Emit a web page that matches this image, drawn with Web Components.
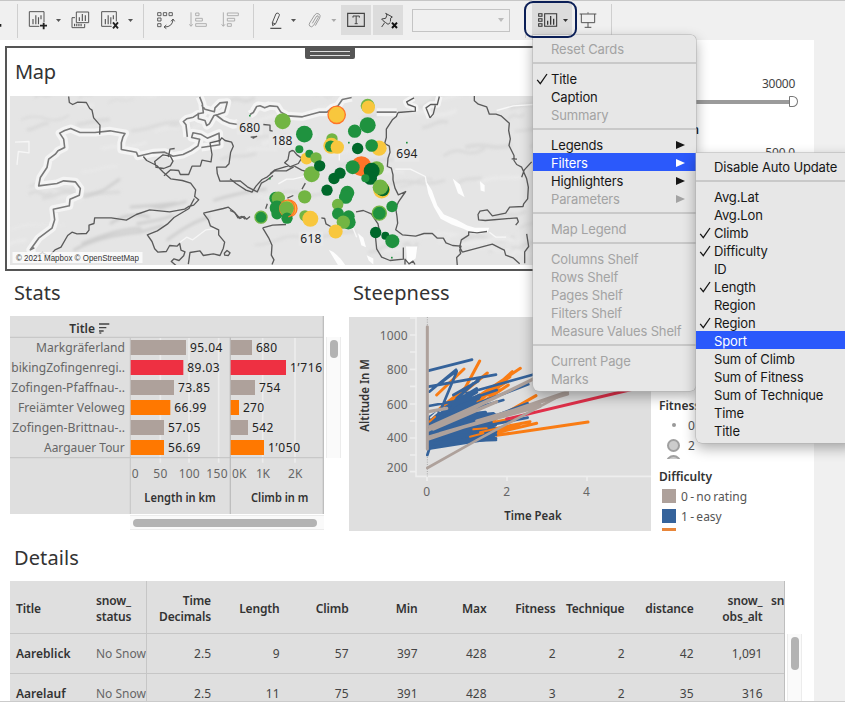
<!DOCTYPE html>
<html lang="en">
<head>
<meta charset="utf-8">
<title>Dashboard</title>
<style>
html,body{margin:0;padding:0;width:845px;height:702px;overflow:hidden;background:#f0f0f0}
body{font-family:"Noto Sans","Open Sans",sans-serif;font-size:12px;color:#333}
</style>
</head>
<body>
<dash-app></dash-app>
<script>
const define=(name,html,setup)=>customElements.define(name,class extends HTMLElement{
  constructor(){super();this.attachShadow({mode:'open'});}
  connectedCallback(){this.shadowRoot.innerHTML=typeof html==='function'?html(this):html;if(setup)setup(this);}
});

/* Toolbar icons, drawn on a triple-size grid: [viewBox x, markup] */
const chartBox=x=>`<path d="M${x} 35h44v44h-44z" fill="none" stroke="#555" stroke-width="3"/><path d="M${x+11} 57v16M${x+19.500} 46v27M${x+27.500} 52v21M${x+35} 46v12" fill="none" stroke="#555" stroke-width="3.400"/>`;
const caret=(x,c='#555')=>`<path d="M${x} 57h15l-7.500 9z" fill="${c}"/>`;
const ICONS={
 tail:[0,`<path d="M0 72h4v8h-4z" fill="#222"/>`],
 add:[54,chartBox(88)+`<path d="M118 66h25v22h-25z" fill="#f0f0f0"/><path d="M131 68v20M120 77h21" stroke="#222" stroke-width="5.500"/>`+caret(168)],
 dup:[201,`<path d="M225 53h-9v30h38v-11" fill="none" stroke="#555" stroke-width="3"/><path d="M229 36h37v32h-37z" fill="#f0f0f0" stroke="#555" stroke-width="3"/><path d="M238 52v11M247 42v21M256 46v17" stroke="#555" stroke-width="3.400"/><path d="M222 75h25" stroke="#555" stroke-width="7" stroke-dasharray="3.500 3"/>`],
 del:[285,chartBox(305)+`<path d="M335 64h24v24h-24z" fill="#f0f0f0"/><path d="M339 67l15 18M354 67l-15 18" stroke="#222" stroke-width="5.500"/>`+caret(384)],
 swap:[432,`<path d="M473 38h10v9h-10zM490 38h10v9h-10zM507 38h10v9h-10zM473 54h10v9h-10zM473 71h10v9h-10z" fill="none" stroke="#555" stroke-width="2.800"/><path d="M494 81q23 0 25-22M513 64l6-7 5 7M499 75l-7 6 7 5" fill="none" stroke="#555" stroke-width="3"/>`],
 asc:[552,`<path d="M573 37v41M568 73l5 6 5-6M587 39h10v8h-10zM587 55h20v8h-20zM587 71h32v8h-32z" fill="none" stroke="#aaa" stroke-width="2.800"/>`],
 desc:[642,`<path d="M670 37v41M665 73l5 6 5-6M682 39h33v8h-33zM682 55h22v8h-22zM682 71h12v8h-12z" fill="none" stroke="#aaa" stroke-width="2.800"/>`],
 pen:[-18,`<path d="M31 85h33" stroke="#444" stroke-width="3.500"/><path d="M37 68l11-27q3-3 7-1 4 2 3 6l-11 25-9 6zM37 68l9 4" fill="none" stroke="#444" stroke-width="2.800"/>`+caret(93)],
 clip:[123,`<path d="M157 70l13-22q6-3 5 4l-14 24q-6 8-12 2-3-4 0-9l15-24q6-8 13-3 6 4 2 12l-13 23" fill="none" stroke="#999" stroke-width="2.800"/>`+caret(214,'#aaa')],
 text:[243,`<path d="M263 40h50v39h-50z" fill="none" stroke="#444" stroke-width="3.500"/><path d="M279 53v-5h19v5M288.500 48v23M284 71h9" fill="none" stroke="#444" stroke-width="3"/>`],
 pin:[339,`<path d="M377 40l20 11-5 3-1 14-7 5-8-6-7-5-4-5 12-2 4-10zM374 68l-9 13" fill="none" stroke="#444" stroke-width="3"/><path d="M391 64h24v24h-24z" fill="#dcdcdc"/><path d="M396 68l15 16M411 68l-15 16" stroke="#111" stroke-width="6"/>`],
 cards:[78,`<path d="M116 41h10v8h-10zM116 56h10v8h-10zM116 71h10v8h-10zM134 41h36v38h-36z" fill="none" stroke="#333" stroke-width="3.200"/><path d="M143 62v12M152 48v26M161 56v18" stroke="#333" stroke-width="3.800"/>`+caret(189,'#333')],
 present:[216,`<path d="M239 42h50M244 42v26h40v-26M264 68v14M254 82h20M264 37v4" fill="none" stroke="#555" stroke-width="3"/>`]
};
define('tool-icon',el=>{
  const [x,body]=ICONS[el.getAttribute('name')],w=+el.getAttribute('w');
  return `<style>:host{display:block;flex:none;width:${w}px;height:40px}:host([on]){background:#dcdcdc;height:30px;margin:0 1px}
  svg{display:block;width:100%;height:100%}</style>
  <svg viewBox="${x} ${el.hasAttribute('on')?15:0} ${w*3} ${el.hasAttribute('on')?90:120}">${body}</svg>`;
});
define('tool-rule',`<style>:host{display:block;flex:none;width:1px;height:34px;margin-top:2px;background:#cfcfcf}</style>`);
define('tool-bar',`<style>
 :host{display:flex;align-items:center;height:40px;box-sizing:border-box;box-shadow:inset 0 1px #c6c6c6;background:#f0f0f0;position:relative}
 .combo{flex:none;box-sizing:border-box;width:98px;height:23px;border:1px solid #c4c4c4;margin:0 15px 0 8px;display:flex;align-items:center;justify-content:flex-end;padding-right:5px}
 .combo i{border:3.500px solid transparent;border-top:4px solid #bbb;border-bottom:0}
 .cards{flex:none;width:46px;height:40px;display:flex;background:linear-gradient(90deg,transparent 6px,#dcdcdc 6px)}
 .ring{position:absolute;left:524px;top:1px;width:53px;height:37px;box-sizing:border-box;border:2.500px solid #0b1f57;border-radius:9px;z-index:5}
 </style>
 <tool-icon name="tail" w="17"></tool-icon><tool-rule></tool-rule>
 <tool-icon name="add" w="49"></tool-icon><tool-icon name="dup" w="28"></tool-icon><tool-icon name="del" w="48"></tool-icon><tool-rule></tool-rule>
 <tool-icon name="swap" w="40"></tool-icon><tool-icon name="asc" w="30"></tool-icon><tool-icon name="desc" w="39"></tool-icon><tool-rule></tool-rule>
 <tool-icon name="pen" w="47"></tool-icon><tool-icon name="clip" w="39"></tool-icon>
 <tool-icon name="text" w="30" on></tool-icon><tool-icon name="pin" w="30" on></tool-icon>
 <div class="combo"><i></i></div><tool-rule></tool-rule>
 <div class="cards"><tool-icon name="cards" w="46"></tool-icon></div><tool-icon name="present" w="39"></tool-icon><tool-rule></tool-rule>
 <div class="ring"></div>`);

define('panel-title',`<style>:host{display:block;font-size:20px;line-height:28px;font-weight:400;color:#333;letter-spacing:.1px;white-space:nowrap}</style><slot></slot>`);

/* Map: two halves, each with its own triple-size drawing grid */
const bL=[
 'M206 18l2 18 10 6 15-7 26 1 10 18 7 5 5 23 19 22-1 28',
 'M430 198l10 12 30 15 20 20 22 20 35 5 25 8 15 20-3 20 12 10-15 16-15 4-12 8-45 8-60-6-40 14-30 17-45-7-50 0 -2 17-15 5v15l-8 10-28 1-15-5-13 10-20 35-18 8-18 20-20-12-18 12',
 'M468 228l-4-15 25-20 22 4 8 15-8 14-20 8-25-4M505 200l5-24 14-2M492 256l20-18 24 2 5 12 25 0 10-25h25l5-18 27 5 3-22-6-35 30-7 5-8 10 8 20 5 5 12-8 18-5 35-10 10h-27l2 20 8 22 60-1 22 18 30 15 12-26 15-8 20-15',
 'M583 324l-16 30-25 15-20 12-20 20-30 20-30 12 14 20 8 22 10 10 25-2 10-18 22 2 8-8 4 20 12 5-4 12-14 14-15-5-8 8 14 12-4 14',
 'M610 368l60-14 15-4 15 12 20 22 12-6 8 8 10-8M610 368l15 20 6 18 25 12 0 15 18 22-4 18-10 22-20-5-30 5-10-14-30 5-5 35M673 488l8-8 9 7-5 8-11-1z'
];
const bMain='M103 472l-12 6 25-35 40-30 8-25-4-32 48-10 2-20 28-12 3-20-15-20-35-3-20 8-55 7 5-25 20-30 5-25 20-15 8-10 20-10-3-25-12-18 15-8 18-6 28 12h45l45-5 45 8-6 10-5 18v20l45 8 5 12 45-10 35-2 25 12 30-5 25-12 20-14 5-20-24-5 4-14 23 4 20 12 35-15 2 35-55 8M562 139l-4-36-8-10 10-8 20-5 15-10 15-3-3-28-8-20M605 44l10 12 28 8 2-12 15-15 22-2-8 30-20 7-12 3-14 25-8 5-5-15-20-5 0-18M650 75l20 15 30 13 15-6M760 62l15-17 20 3 15-4';
const bR=[
 'M504 66l-5 12-12 10-18 28 0 25-5 18 14 8 2 18-6 18-2 25 12 5 5 20 0 15 6 25 10 20 22-10-22 32-8 18 4 25 2 20-6 20 20 15 40 4 25-8 25 0 15 14 18 0 8 14 20 8 25 2-4 12 3 10-12 12 2 25',
 'M504 66l52-4 0-12-22-8-4-8 22-12M600 82l-12-30 14-10h20l6-24M600 82l10-12 6-25M733 16l0 15 12 10 25 8 8 22 20 0 15 5 25 22-2 22 5 25-4 20 15 30 0 15 8 12 15 8 15 35 5 25-2 35-12 15 -2 8-40 2-12 18-40 8-15-18-22 4-6 10 2 16 20 2 95-8 4 12-8 10M845 205l16 1M875 260l8-22 22-24M697 485l-8-15 5-22 22-14 0-10 25 3 30-4M697 485l90-24 28 14 8 4 4 15 22 8 20 18M890 430l6 38-12 16 0 34',
 'M0 265l18 14 30 20 18 6 12-18 18-20 16-8 22-18h35l22-12M186 180l-8 5-4 22-10 10 16 12 25-10 10-16-14-10-10-12zM120 250l15-12 40-12M190 225l25 14 14 4M0 360l14 6 10 16 12-4 10 8M98 412l30-8 40-2M98 412l18 30 10 22-2 30 8 14-6 14M274 382l10 2 4 16 14 8M378 364l22-4 24 10 20 30 4 20-12 15 4 40 15 25 25 10 40-4v-35M525 522l0-16 12 14 12-8 6 10M226 278l-10 18M190 315l-18 8M112 340l-5 15M100 102l20 2 0 16 8 2M62 140l18-2-12 6'
];
const bTop='M60 72l10-6 10-18 10-2 14 6 16-6 22 2 10 16 20 12 45 3 50-14 24 0 14-12 18-6 14-20 28-6M440 65l60 0M0 98l24 4';
const G='#1f923f',L='#72b543',D='#00682b',Y='#f8c73d',O='#ff7428';
const dots=[[158,92,24,L],[320,73,26,Y,O],[413,46,21,L],[415,50,20,Y],[223,131,25,G],[413,104,24,G],[374,122,20,G],[208,176,12,G],[306,145,17,L],[304,166,24,Y],[302,167,17,G],[322,170,20,Y],[383,174,17,D],[447,173,23,Y],[425,165,19,G],[230,204,18,Y],[238,190,12,G],[258,202,17,L],[245,251,24,L],[269,226,17,D],[394,227,30,O],[368,230,21,G],[440,234,22,L],[425,241,24,D],[421,263,20,D],[406,263,12,G],[312,264,17,D],[330,248,17,D],[291,299,17,D],[455,299,25,Y],[458,297,20,D],[451,290,23,L],[352,307,21,G],[347,320,20,G],[323,342,17,L],[224,319,20,L],[137,323,19,G],[145,323,20,L],[141,352,22,G],[141,370,17,G],[175,354,26,Y,O],[170,354,22,L],[171,383,17,G],[93,380,18,G,L],[225,376,17,L],[241,385,24,Y],[324,370,18,G],[356,377,18,G],[355,395,22,G],[340,395,20,L],[317,423,21,Y],[448,368,21,G,L],[486,348,17,G],[437,426,17,D],[466,436,12,D],[487,452,21,G]];
const pins=[[60,75],[357,156],[531,156],[120,264],[486,501]];
define('dash-map',()=>{
  let s=7;const r=()=>(s=(s*16807)%2147483647)/2147483647;
  let relief='';
  for(let i=0;i<90;i++){const x=r()*1900,y=r()*510,w=20+r()*70;relief+=`<path d="M${x|0} ${y|0}q${w/2|0} ${-25*r()|0} ${w|0} ${-18*r()|0}t${w|0} ${-12*r()|0}" stroke="${r()>.5?'#d3d3d3':'#eee'}" stroke-width="${4+r()*9|0}"/>`;}
  return `<style>:host{display:block;height:169px;overflow:hidden;background:#e5e5e5}svg{display:block}</style>
 <svg width="637" height="169" viewBox="10 95.500 637 169" font-family="Noto Sans,sans-serif">
 <defs><filter id="b"><feGaussianBlur stdDeviation="5"/></filter></defs>
 <g transform="translate(0 90) scale(.33333)" fill="none" stroke-linejoin="round">
  <g filter="url(#b)" opacity=".6">${relief}</g>
  <g stroke="#cecece" stroke-width="8" filter="url(#b)"><path d="M220 480q80-45 200-55l70-20M245 460q120-50 180-45M330 400q60-40 120-20M390 350q80-5 140-12M410 400q70-10 110-25M500 450q80-60 130-70M640 330q80-25 160-35M440 345l40 8 80-20M250 320l60-20 50-35"/></g>
  <path d="${bMain}" stroke="#f4f4f4" stroke-width="24"/>
  <path d="M45 155l42-2v34l-32-4-4 40M540 455l20-15 18 8 40-30 30-4" stroke="#f6f6f6" stroke-width="4"/>
  <path d="${bMain}" stroke="#787878" stroke-width="4.800"/>
  <path d="${bL.join('')}" stroke="#5a5a5a" stroke-width="4"/>
 </g>
 <g transform="translate(230 90) scale(.33333)" fill="none" stroke-linejoin="round">
  <path d="${bTop}" stroke="#f4f4f4" stroke-width="24"/>
  <path d="M555 62l0-12-22-8-4-8 22-12M600 82l-12-30 14-10h20l6-24" stroke="#f4f4f4" stroke-width="20"/>
  <g fill="#fdfdfd"><path d="M587 270L606 300 622 345 642 372 680 388 712 405 735 412 778 412 772 426 735 431 700 415 665 402 632 385 612 350 595 310zM668 264l22 18 14 38-20-12zM750 272l14 12 0 20-12-4zM528 468h34l-5 35-25 20zM296 478q25 8 50 46h-22zM384 428l16 14 8 28-14-6zM410 494l20 10 0 18-14-12z"/></g>
  <path d="M496 236l45 0 45 22 4 25M800 60l50-14 60-4M145 280l25-14 20 0 40-10M328 170v40M300 150l0 18M360 390l20 50M778 425l20 15 30 0" stroke="#f8f8f8" stroke-width="4"/>
  <path d="${bTop}" stroke="#787878" stroke-width="4.800"/>
  <path d="${bR.join('')}" stroke="#5a5a5a" stroke-width="4"/>
  <g fill="#e8e8e8" fill-opacity=".9"><path d="M20 90h78v42h-78zM116 131h78v40h-78zM494 172h74v42h-74zM206 424h74v42h-74z"/></g>
  ${dots.map(([x,y,q,c,o])=>`<circle cx="${x}" cy="${y}" r="${q}" fill="${c}" ${o?`stroke="${o}" stroke-width="4"`:''}/>`).join('')}
  <path d="M175 329a26 26 0 0 1 0 50" stroke="${O}" stroke-width="4"/>
  ${pins.map(([x,y])=>`<path d="M${x-3} ${y-2}h5v5h-5z" fill="${G}"/>`).join('')}
  <g fill="#222" font-size="36"><text x="28" y="124" textLength="62">680</text><text x="125" y="163" textLength="62">188</text><text x="499" y="204" textLength="63">694</text><text x="211" y="457" textLength="63">618</text></g>
 </g>
 <path d="M12.500 251.500h130v11h-130z" fill="#fff" fill-opacity=".75"/>
 <text x="16" y="260" textLength="123" lengthAdjust="spacingAndGlyphs" font-family="Liberation Sans,sans-serif" font-size="8.500" fill="#333">© 2021 Mapbox © OpenStreetMap</text>
 </svg>`;});

define('map-panel',`<style>
 :host{display:block;box-sizing:border-box;width:647px;height:225px;border:2px solid #555;background:#fff;padding:10px 3px 0;position:relative}
 panel-title{margin:0 0 9.500px 5px;letter-spacing:-.3px}
 .grip{position:absolute;left:298px;top:-1px;width:50px;height:12px;background:#555;border-radius:0 0 2px 2px;display:flex;flex-direction:column;gap:3px;justify-content:center;align-items:center}
 .grip i{width:40px;height:1px;background:#ddd}
 </style><panel-title>Map</panel-title><dash-map></dash-map><div class="grip"><i></i><i></i></div>`);

define('range-filters',`<style>
 :host{display:block;width:143px;padding-top:29px;font-size:12px;color:#444}
 .max{text-align:right;line-height:17px;letter-spacing:-.25px}
 .slide{display:flex;align-items:center;height:11px;margin:4px -3px 0 0}
 .slide i{flex:1;height:4px;background:#9b9b9b}
 .slide b{box-sizing:border-box;width:9px;height:11px;border:1.300px solid #777;background:#fff;border-radius:1px 6px 6px 1px}
 .name{font-weight:600;line-height:16px;color:#222;margin:15px 0 0;width:47px;text-align:right;white-space:nowrap}
 .val{text-align:right;line-height:17px;margin-top:6px;letter-spacing:-.2px}
 </style><div class="max">30000</div><div class="slide"><i></i><b></b></div><div class="name">in m</div><div class="val">500.0</div>`);

define('scroll-track',el=>{const v=el.hasAttribute('vertical');return `<style>:host{display:block;box-sizing:border-box;background:#fafafa;${v?'border:solid #ececec;border-width:0 1px;width:15px;padding:3px 3px':'border:solid #ececec;border-width:1px 0;height:15px;padding:3px 3px'}}
 i{display:block;background:#b3b3b3;border-radius:4px;${v?'width:8px':'height:8px'};${v?'height':'width'}:${el.getAttribute('thumb')}px}</style><i></i>`;});

/* Stats bar chart on a triple-size grid */
const rows=[['Markgräferland',267,108,'95.04',166,'#aea19b','680',64,97,63],['bikingZofingenregi..',341,34,'89.03',158,'#ee3042','1’716',166,97,96],['Zofingen-Pfaffnau-..',341,34,'73.85',130,'#aea19b','754',73,96,64],['Freiämter Veloweg',321,54,'66.99',119,'#ff7800','270',25,96,63],['Zofingen-Brittnau-..',338,37,'57.05',100,'#aea19b','542',52,97,64],['Aargauer Tour',242,132,'56.69',100,'#ff7800','1’050',100,97,96]];
define('stats-chart',()=>`<style>:host{display:block;width:314px;height:198px}svg{display:block}</style>
 <svg width="314" height="198" viewBox="30 123 942 594" font-family="Noto Sans,sans-serif" font-size="36" fill="#666">
 <path d="M30 123h942v594h-942z" fill="#dfdfdf"/>
 <path d="M481 188v375M567 188v375M656 188v375M788 188v375M885 188v375" stroke="#ececec" stroke-width="5"/>
 <path d="M30 187h942M391 187v530M30 548h942" stroke="#c8c8c8" stroke-width="3.500" fill="none"/><path d="M691 187v530M970 123v594" stroke="#bebebe" stroke-width="4"/>
 <text x="208" y="173" font-weight="600" fill="#333" textLength="77">Title</text>
 <path d="M297 147h31M297 158h22M297 168h14" stroke="#444" stroke-width="4"/><path d="M298 174h6" stroke="#444" stroke-width="4"/>
 ${rows.map((r,i)=>{const y=231+i*60;return `<text x="${r[2]}" y="${y}" textLength="${r[1]}" lengthAdjust="spacingAndGlyphs">${r[0]}</text>
 <path d="M392 ${195+60*i}h${r[4]}v45h-${r[4]}zM692 ${195+60*i}h${r[7]}v45h-${r[7]}z" fill="${r[5]}"/>
 <text x="${392+r[4]+12}" y="${y}" fill="#222" textLength="${r[8]}">${r[3]}</text><text x="${692+r[7]+12}" y="${y}" fill="#222" textLength="${r[9]}">${r[6]}</text>`}).join('')}
 <text x="395" y="608">0</text><text x="460" y="608" textLength="42">50</text><text x="536" y="608" textLength="63">100</text><text x="619" y="608" textLength="64">150</text>
 <text x="696" y="608" textLength="43">0K</text><text x="768" y="608" textLength="42">1K</text><text x="864" y="608" textLength="43">2K</text>
 <g font-weight="600" fill="#333"><text x="433" y="680" textLength="214" lengthAdjust="spacingAndGlyphs">Length in km</text><text x="753" y="680" textLength="172" lengthAdjust="spacingAndGlyphs">Climb in m</text></g>
 </svg>`);
define('stats-panel',`<style>:host{display:grid;grid-template-columns:314px 15px;grid-template-rows:44px 198px 15px;column-gap:2px;row-gap:1px;width:331px}
 panel-title{grid-column:1/3;padding:8px 0 0 4px}
 scroll-track[vertical]{height:121px;margin-top:21px}
 .h{grid-column:1;margin-left:120px}</style>
 <panel-title>Stats</panel-title><stats-chart></stats-chart><scroll-track vertical thumb="18"></scroll-track><scroll-track class="h" thumb="184"></scroll-track>`);

/* Steepness line chart */
define('steep-chart',()=>{
  const B='#35639b',OR='#f97c14',T='#aea19b';
  let s=11;const r=()=>(s=(s*16807)%2147483647)/2147483647;
  const ln=(a,c,w=8)=>`<path d="${a.map(p=>`M${p[0]} ${p[1]}L${p[2]} ${p[3]}`).join('')}" stroke="${c}" stroke-width="${w}"/>`;
  const fan=[];
  for(let i=0;i<22;i++){const y=478-i*2.200;fan.push([266,y,385+r()*35,y-66-r()*20]);}
  const low=[];
  for(let i=0;i<22;i++)low.push([266,430+i*4.300,430+r()*38,412+i*3.800]);
  return `<style>:host{display:block;width:302px;height:214px}svg{display:block}</style>
 <svg width="302" height="214" viewBox="27 126 906 642" font-family="Noto Sans,sans-serif" font-size="36" fill="#666">
 <path d="M27 126h906v642h-906z" fill="#dfdfdf"/>
 <path d="M228 126v478h705M210 129h18M210 180h18M210 231h18M210 283h18M210 334h18M210 387h18M210 438h18M210 489h18M210 540h18M210 590h18M261 604v14M501 604v14M741 604v14" fill="none" stroke="#eee" stroke-width="5"/>
 <path d="M262 126v478" stroke="#aaa" stroke-width="3" stroke-dasharray="3 4"/>
 <g fill="none" stroke-linecap="round">
 ${ln([[290,360,372,282],[275,430,442,294],[375,340,419,258],[300,400,380,335],[268,440,330,400],[390,380,541,280],[400,385,500,320],[400,395,517,290],[405,382,510,305],[400,400,505,330],[420,365,500,310],[400,375,480,345],[400,370,470,335],[400,470,588,362],[440,480,590,445],[420,470,570,440],[400,455,520,430],[470,481,744,441],[450,470,540,455],[380,465,450,462]],OR,9)}
 ${ln(fan,B,9)}${ln(low,B,10)}
 ${ln([[262,540,275,500],[266,287,396,254],[266,335,468,299],[268,350,348,284],[300,325,350,288],[300,410,350,290],[310,410,400,325],[350,370,420,310],[340,360,415,318],[266,393,420,365],[380,355,578,299],[400,390,565,328],[270,425,410,340],[340,390,470,345],[270,445,400,352],[266,440,490,375],[420,440,563,385],[450,450,563,428],[266,480,468,480],[300,500,468,495],[266,505,468,490],[266,520,468,470]],B)}
 ${ln([[272,428,290,412],[300,408,315,398]],'#dfdfdf',5)}${ln([[268,440,285,425],[390,485,430,475],[420,472,480,458],[400,463,440,460]],OR,6)}
 ${ln([[262,155,262,522]],T,9)}${ln([[266,410,320,400],[266,465,580,312],[270,455,460,370],[280,462,470,380]],T,10)}
 ${ln([[266,492,683,350],[266,486,540,405],[300,475,600,388],[350,462,600,395],[410,438,683,357]],T,9)}
 ${ln([[500,432,940,328]],'#e0304a',9)}${ln([[262,579,420,490],[420,490,683,350]],T,8)}
 </g>
 <text x="119" y="194" textLength="84">1000</text><text x="140" y="297" textLength="63">800</text><text x="140" y="401" textLength="63">600</text><text x="140" y="502" textLength="63">400</text><text x="140" y="591" textLength="63">200</text>
 <text x="250" y="663">0</text><text x="490" y="663">2</text><text x="729" y="663">4</text>
 <g font-weight="600" fill="#333"><text x="493" y="735" textLength="172" lengthAdjust="spacingAndGlyphs">Time Peak</text><text transform="translate(88 470) rotate(-90)" textLength="218" lengthAdjust="spacingAndGlyphs">Altitude In M</text></g>
 </svg>`;});
define('steep-panel',`<style>:host{display:block;width:302px}panel-title{padding:8px 0 10px 4px}</style><panel-title>Steepness</panel-title><steep-chart></steep-chart>`);

define('chart-legend',`<style>
 :host{display:block;width:150px;height:260px;box-sizing:border-box;padding-top:126px;font-size:12px;color:#555;white-space:nowrap;word-spacing:-.8px}
 h4{margin:0;font-size:12px;font-weight:600;line-height:18px;color:#333}
 .r{display:flex;align-items:center;height:20px}
 .c{width:29px;display:flex;justify-content:center}
 .dot{width:4px;height:4px;border-radius:50%;background:#999}
 .ring{box-sizing:border-box;width:13px;height:13px;border-radius:50%;border:2px solid #a0a0a0;background:#ccc}
 .cut{height:4px;overflow:hidden;display:flex}
 .sw{width:14px;height:14px;margin:0 5px 0 3px}
 </style>
 <h4>Fitness</h4><div class="r"><span class="c"><i class="dot"></i></span>0</div><div class="r"><span class="c"><i class="ring"></i></span>2</div>
 <div class="cut"><span class="c"><i class="ring" style="width:15px;height:15px"></i></span></div>
 <h4 style="margin:9px 0 0">Difficulty</h4>
 <div class="r"><i class="sw" style="background:#aea19b"></i>0 - no rating</div><div class="r"><i class="sw" style="background:#35639b"></i>1 - easy</div>
 <div class="cut" style="height:3px;margin-top:2px"><i class="sw" style="background:#e8863a"></i></div>`);

define('details-table',`<style>
 :host{display:block;width:775px;height:121px;background:#dfdfdf;overflow:hidden;box-sizing:border-box;border-right:1.500px solid #bebebe;color:#444}
 .row{display:grid;grid-template-columns:80px 57px 64px repeat(8,69px) 21px;height:39px;align-items:center;border-top:1px solid #c6c6c6;font-size:12px;text-align:right}
 .row>*:nth-child(1){text-align:left;padding-left:6px;font-weight:600;color:#333}
 .row>*:nth-child(2){text-align:left;padding-left:6px;white-space:nowrap;overflow:hidden;color:#666;border-right:1px solid #c6c6c6;height:100%;display:flex;align-items:center;line-height:16px;box-sizing:border-box}
 .row>*:nth-child(n+4){padding-right:.5px}
 .head{height:52px;border:0;font-weight:600;color:#333;line-height:16px;letter-spacing:-.15px}
 .head>*{padding-top:3px}
 .head>*:nth-child(2){color:#333}
 .head>*:last-child{text-align:left;padding:0 0 13px 8px;overflow:hidden}
 </style>
 <div class="row head"><span>Title</span><span>snow_<br>status</span><span>Time<br>Decimals</span><span>Length</span><span>Climb</span><span>Min</span><span>Max</span><span>Fitness</span><span>Technique</span><span>distance</span><span>snow_<br>obs_alt</span><span>sno</span></div>
 <div class="row"><span>Aareblick</span><span>No Snow</span><span>2.5</span><span>9</span><span>57</span><span>397</span><span>428</span><span>2</span><span>2</span><span>42</span><span>1,091</span></div>
 <div class="row"><span>Aarelauf</span><span>No Snow</span><span>2.5</span><span>11</span><span>75</span><span>391</span><span>428</span><span>3</span><span>2</span><span>35</span><span>316</span></div>`);
define('details-panel',`<style>:host{display:grid;grid-template-columns:775px 15px;column-gap:2px;width:792px}
 panel-title{grid-column:1/3;padding:0 0 9px 4px}scroll-track{margin-top:53px}</style>
 <panel-title>Details</panel-title><details-table></details-table><scroll-track vertical thumb="33"></scroll-track>`);

define('menu-rule',`<style>:host{display:flex;height:12px;align-items:center}i{flex:1;height:1.500px;background:#c9c9c9}</style><i></i>`);
define('menu-item',`<style>
 :host{display:flex;align-items:center;height:18px;box-sizing:border-box;padding:1px 11px 0 0;color:#161616;white-space:nowrap}
 :host([off]){color:#a3a3a3}:host([hot]){background:#2b59fb;color:#fff}
 .k{flex:none;width:18px;display:flex;justify-content:flex-end;padding-right:0}
 .k svg{margin-right:3px}.t{flex:1}
 .k svg,.a{visibility:hidden}:host([checked]) .k svg,:host([sub]) .a{visibility:visible}
 .a{border:4.500px solid transparent;border-left:9px solid;border-right:0}
 </style><span class="k"><svg width="12" height="12" viewBox="0 0 12 12"><path d="M1.200 6.800L4.300 10.600 11 1" fill="none" stroke="currentColor" stroke-width="1.300"/></svg></span><span class="t"><slot></slot></span><i class="a"></i>`);
define('drop-menu',`<style>:host{display:block;box-sizing:border-box;padding:4px 0;background:#e7e7e7;border-radius:0 5px 6px 6px;box-shadow:0 0 0 .5px #b0b0b0,0 5px 14px rgba(0,0,0,.33);font:400 13px Inter,sans-serif;letter-spacing:-.14px}</style><slot></slot>`);

define('dash-app',`<style>
 :host{display:block;position:relative;width:845px;height:702px;overflow:hidden;background:#f0f0f0}
 .page{width:814px;height:661px;background:#fff;overflow:hidden;display:flex;flex-direction:column}
 .r{display:flex;flex:none}
 .r1{padding:6px 0 0 5px;height:225px;align-items:flex-start}
 .r2{padding-left:10px;height:273px;gap:8px}
 .r3{padding-left:10px}
 .foot{position:absolute;left:0;right:0;bottom:0;height:1.500px;background:#cbcbcb}
 drop-menu{position:absolute}
 #cards{left:533px;top:35px;width:163px;height:356px}
 #filters{left:696px;top:153px;width:160px;height:290px}
 </style>
 <tool-bar></tool-bar>
 <div class="page">
  <div class="r r1"><map-panel></map-panel><range-filters></range-filters></div>
  <div class="r r2"><stats-panel></stats-panel><steep-panel></steep-panel><chart-legend></chart-legend></div>
  <div class="r r3"><details-panel></details-panel></div>
 </div>
 <div class="foot"></div>
 <drop-menu id="cards"><menu-item off>Reset Cards</menu-item><menu-rule></menu-rule>
 <menu-item checked>Title</menu-item><menu-item>Caption</menu-item><menu-item off>Summary</menu-item><menu-rule></menu-rule>
 <menu-item sub>Legends</menu-item><menu-item sub hot>Filters</menu-item><menu-item sub>Highlighters</menu-item><menu-item sub off>Parameters</menu-item><menu-rule></menu-rule>
 <menu-item off>Map Legend</menu-item><menu-rule></menu-rule>
 <menu-item off>Columns Shelf</menu-item><menu-item off>Rows Shelf</menu-item><menu-item off>Pages Shelf</menu-item><menu-item off>Filters Shelf</menu-item><menu-item off>Measure Values Shelf</menu-item><menu-rule></menu-rule>
 <menu-item off>Current Page</menu-item><menu-item off>Marks</menu-item></drop-menu>
 <drop-menu id="filters"><menu-item>Disable Auto Update</menu-item><menu-rule></menu-rule>
 <menu-item>Avg.Lat</menu-item><menu-item>Avg.Lon</menu-item><menu-item checked>Climb</menu-item><menu-item checked>Difficulty</menu-item><menu-item>ID</menu-item><menu-item checked>Length</menu-item><menu-item>Region</menu-item><menu-item checked>Region</menu-item><menu-item hot>Sport</menu-item><menu-item>Sum of Climb</menu-item><menu-item>Sum of Fitness</menu-item><menu-item>Sum of Technique</menu-item><menu-item>Time</menu-item><menu-item>Title</menu-item></drop-menu>`);
</script>
</body>
</html>
